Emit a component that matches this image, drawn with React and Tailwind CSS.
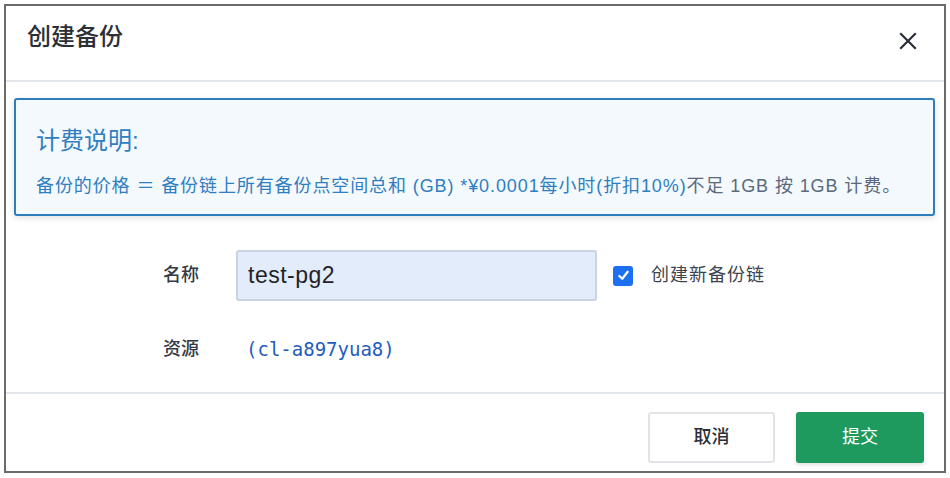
import React from 'react';

const font = { fontFamily: '"Liberation Sans", "Noto Sans CJK SC", sans-serif' };

const CloseIcon = () => (
    <svg width="18" height="18" viewBox="0 0 18 18" fill="none" stroke="#2a2f3a" strokeWidth="2.2" strokeLinecap="square">
        <path d="M2 2 L16 16 M16 2 L2 16" />
    </svg>
);

const App = () => {
    return (
        <div className="bg-white w-[950px] h-[478px] pt-[4px] pl-[4px]" style={font}>
            <div className="w-[942px] h-[469px] border-2 border-[#6b6b6b] bg-white flex flex-col">

                {/* header */}
                <div className="h-[76px] shrink-0 flex items-center justify-between pl-[21px] pr-[27px] pb-[12px] border-b-2 border-[#e3e7ec]">
                    <h1 className="text-[24px] font-medium text-[#2b3038]">创建备份</h1>
                    <button className="mt-[8px]"><CloseIcon /></button>
                </div>

                {/* body */}
                <div className="flex-1 flex flex-col">
                    <div className="mt-[16px] ml-[8px] mr-[9px] h-[118px] border-2 border-[#2f7dba] rounded-[3px] bg-[#f4f9fd] shadow-[0_2px_6px_rgba(0,0,0,0.12)] pl-[20px] pt-[26px]">
                        <h2 className="text-[24px] leading-[30px] text-[#2f7ec1]">计费说明:</h2>
                        <p className="mt-[18px] text-[18px] leading-[24px] tracking-[0.9px] text-[#2f7ec1] whitespace-nowrap">
                            备份的价格 ＝ 备份链上所有备份点空间总和 (GB) *¥0.0001每小时(折扣10%)<span className="text-[#5a6a7c]">不足 1GB 按 1GB 计费。</span>
                        </p>
                    </div>

                    <div className="mt-[34px] flex items-center">
                        <label className="w-[230px] pl-[157px] text-[18px] font-medium text-[#333a44]">名称</label>
                        <div className="w-[361px] h-[51px] bg-[#e3ecfa] border-2 border-[#c9d3e1] rounded-[3px] flex items-center pl-[10px]">
                            <span className="text-[23px] tracking-[0.5px] text-[#1f2329]">test-pg2</span>
                        </div>
                        <div className="ml-[16px] w-[20px] h-[20px] rounded-[3px] bg-[#1d6ff2] flex items-center justify-center">
                            <svg width="13" height="13" viewBox="0 0 14 14" fill="none" stroke="white" strokeWidth="2.4" strokeLinecap="round" strokeLinejoin="round">
                                <path d="M2.5 7.5 L5.7 10.5 L11.5 3" />
                            </svg>
                        </div>
                        <span className="ml-[18px] text-[18px] tracking-[1px] text-[#3d444f]">创建新备份链</span>
                    </div>

                    <div className="mt-[34px] flex items-center">
                        <label className="w-[240px] pl-[157px] text-[18px] font-medium text-[#333a44]">资源</label>
                        <span className="text-[19px] text-[#1f5cbf]" style={{ fontFamily: '"DejaVu Sans Mono", monospace' }}>(cl-a897yua8)</span>
                    </div>
                </div>

                {/* footer */}
                <div className="h-[79px] shrink-0 border-t-2 border-[#e3e7ec] flex justify-end items-start pt-[18px] pr-[20px] gap-[21px]">
                    <button className="w-[127px] h-[51px] border-2 border-[#e1e5ea] rounded-[3px] bg-white text-[18px] font-medium text-[#2b3038]">取消</button>
                    <button className="w-[128px] h-[51px] rounded-[3px] bg-[#1f9a5f] text-[18px] text-white shadow-[0_2px_4px_rgba(0,0,0,0.12)]">提交</button>
                </div>
            </div>
        </div>
    );
};

export default App;
